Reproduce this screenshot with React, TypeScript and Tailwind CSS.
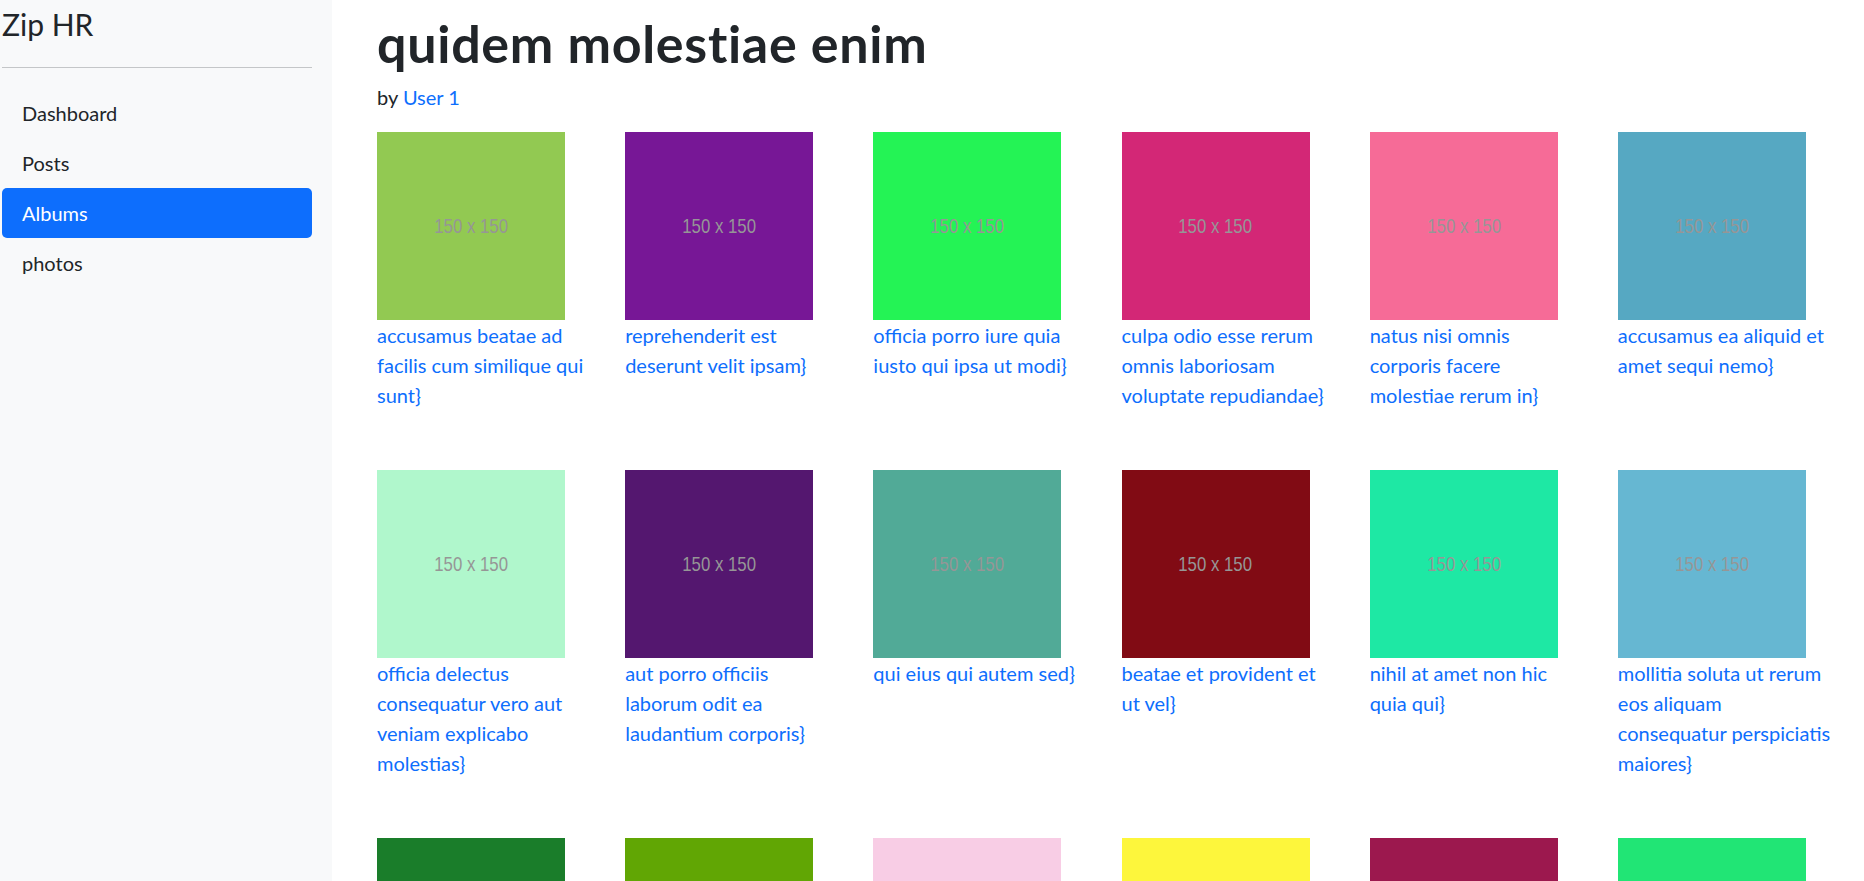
import React from "react";

type Photo = {
  id: number;
  title: string;
  color: string;
};

// line breaks follow the album page as rendered
const photos: Photo[] = [
  { id: 1, title: "accusamus beatae ad\nfacilis cum similique qui\nsunt", color: "#92c952" },
  { id: 2, title: "reprehenderit est\ndeserunt velit ipsam", color: "#771796" },
  { id: 3, title: "officia porro iure quia\niusto qui ipsa ut modi", color: "#24f355" },
  { id: 4, title: "culpa odio esse rerum\nomnis laboriosam\nvoluptate repudiandae", color: "#d32776" },
  { id: 5, title: "natus nisi omnis\ncorporis facere\nmolestiae rerum in", color: "#f66b97" },
  { id: 6, title: "accusamus ea aliquid et\namet sequi nemo", color: "#56a8c2" },
  { id: 7, title: "officia delectus\nconsequatur vero aut\nveniam explicabo\nmolestias", color: "#b0f7cc" },
  { id: 8, title: "aut porro officiis\nlaborum odit ea\nlaudantium corporis", color: "#54176f" },
  { id: 9, title: "qui eius qui autem sed", color: "#51aa97" },
  { id: 10, title: "beatae et provident et\nut vel", color: "#810b14" },
  { id: 11, title: "nihil at amet non hic\nquia qui", color: "#1ee8a4" },
  { id: 12, title: "mollitia soluta ut rerum\neos aliquam\nconsequatur perspiciatis\nmaiores", color: "#66b7d2" },
  { id: 13, title: "repudiandae iusto deleniti rerum", color: "#1a7d2a" },
  { id: 14, title: "est necessitatibus architecto ut laborum", color: "#61a604" },
  { id: 15, title: "harum dicta similique quis dolore earum ex qui", color: "#f8cde5" },
  { id: 16, title: "iusto sunt nobis quasi veritatis quas expedita voluptatum deserunt", color: "#fdf63c" },
  { id: 17, title: "natus doloribus necessitatibus ipsa", color: "#9c184e" },
  { id: 18, title: "laboriosam odit nam necessitatibus et illum dolores reiciendis", color: "#21e575" },
];

const links = ["Dashboard", "Posts", "Albums", "photos"];

function Sidebar() {
  return (
    <aside className="w-[332px] shrink-0 bg-[#f8f9fa] pl-[2px] pr-[20px]">
      <div className="pt-[6px] text-[30px] leading-[36px] text-[#212529]">Zip HR</div>
      <hr className="mt-[25px] border-t border-[#c4c6c8]" />
      <nav className="mt-[20px] flex flex-col">
        {links.map((l) => (
          <a
            key={l}
            href="#"
            className={
              l === "Albums"
                ? "rounded-[5px] bg-[#0d6efd] px-[20px] py-[10px] text-[20px] leading-[30px] text-white"
                : "rounded-[5px] px-[20px] py-[10px] text-[20px] leading-[30px] text-[#212529]"
            }
          >
            {l}
          </a>
        ))}
      </nav>
    </aside>
  );
}

function PhotoCard({ photo }: { photo: Photo }) {
  return (
    <div className="mb-[60px]">
      <div
        className="flex h-[188px] w-[188px] items-center justify-center"
        style={{ backgroundColor: photo.color }}
      >
        <span className="inline-block scale-x-[0.8] font-['Liberation_Sans',sans-serif] text-[21px] text-[#969696]">
          150 x 150
        </span>
      </div>
      <a href="#" className="block whitespace-pre-line text-[20px] leading-[30px] text-[#0d6efd]">
        {photo.title + "}"}
      </a>
    </div>
  );
}

export default function App() {
  return (
    <div className="flex min-h-screen bg-white font-['Lato',sans-serif]">
      <Sidebar />
      <main className="flex-1 pl-[45px] pr-[28px] pt-[12px]">
        <h1 className="mb-[8px] text-[52px] font-bold leading-[62px] tracking-[0.7px] text-[#212529] [font-variant-ligatures:none]">
          quidem molestiae enim
        </h1>
        <p className="text-[20px] leading-[30px] text-[#212529]">
          by <a href="#" className="text-[#0d6efd]">User 1</a>
        </p>
        <div className="mt-[20px] grid w-[1459px] grid-cols-6 gap-x-[30px]">
          {photos.map((p) => (
            <PhotoCard key={p.id} photo={p} />
          ))}
        </div>
      </main>
    </div>
  );
}
